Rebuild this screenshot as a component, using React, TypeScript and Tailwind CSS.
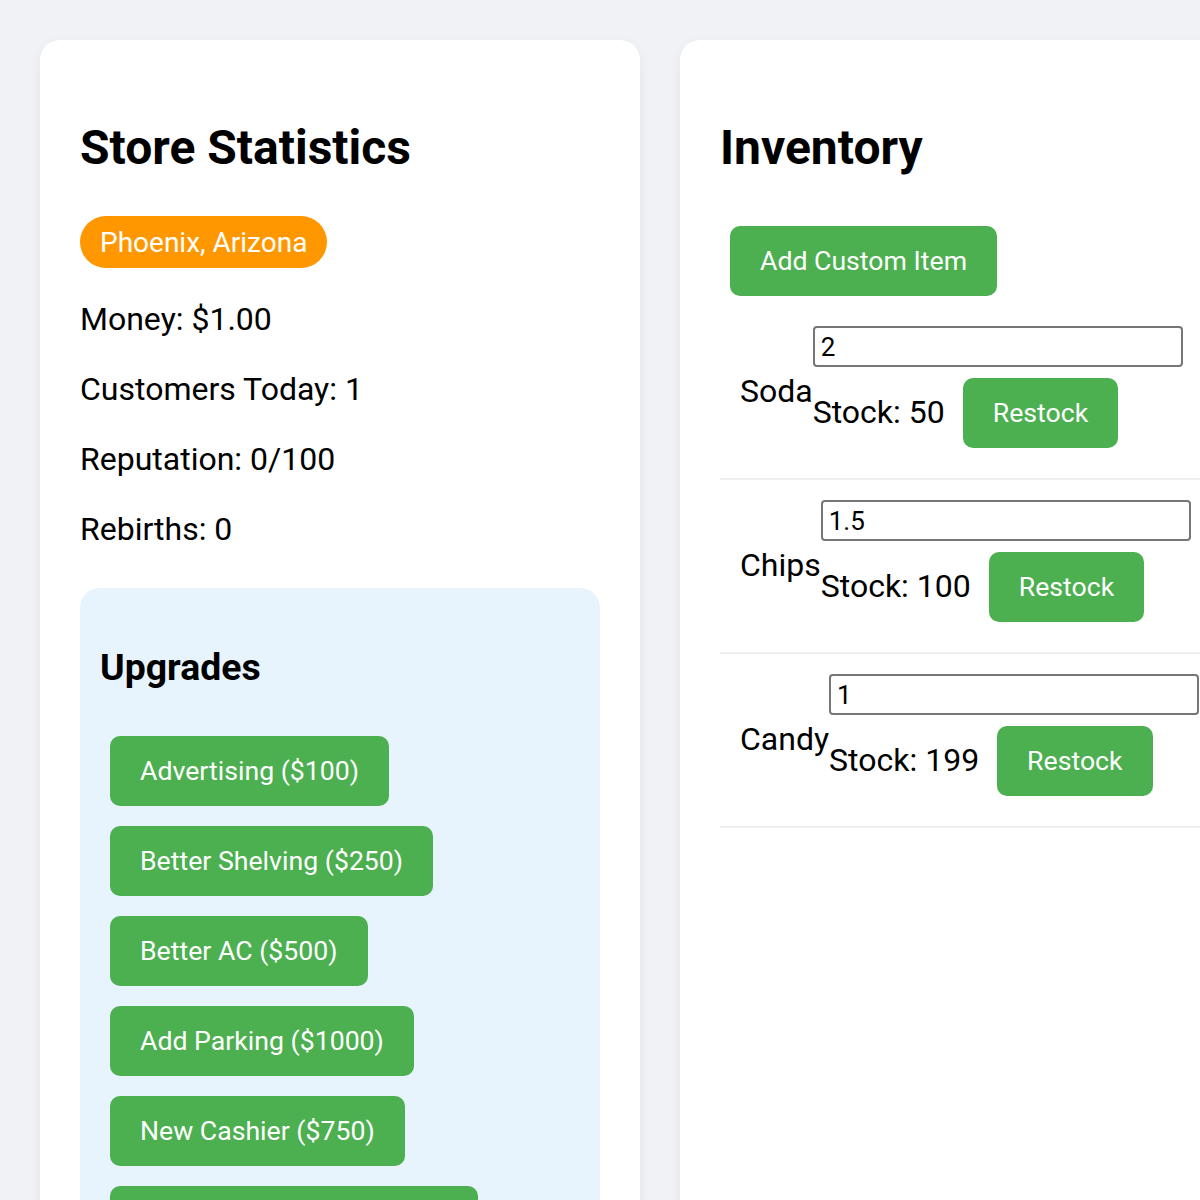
import React from "react";

const upgrades = [
  "Advertising ($100)",
  "Better Shelving ($250)",
  "Better AC ($500)",
  "Add Parking ($1000)",
  "New Cashier ($750)",
  "Security Cameras ($1500)",
];

const items = [
  { name: "Soda", price: "2", stock: 50 },
  { name: "Chips", price: "1.5", stock: 100 },
  { name: "Candy", price: "1", stock: 199 },
];

const btn =
  "bg-[#4caf50] text-white text-[26.67px] leading-[30px] px-[30px] py-[20px] rounded-[10px] m-[10px]";

export default function App() {
  return (
    <div className="min-h-[1200px] bg-[#f0f2f5] overflow-hidden font-['Roboto',sans-serif] text-black">
      <div className="w-[1320px] p-[40px] grid grid-cols-[600px_600px] gap-[40px]">
        {/* Store stats */}
        <div className="bg-white rounded-[20px] p-[40px] shadow-[0_4px_12px_rgba(0,0,0,0.06)]">
          <h2 className="text-[48px] font-bold leading-[56px] mt-[40px] mb-[40px]">Store Statistics</h2>
          <div>
            <span className="inline-block bg-[#ff9800] text-white text-[28px] leading-[32px] px-[20px] pt-[11px] pb-[9px] rounded-full">
              Phoenix, Arizona
            </span>
          </div>
          <div className="text-[32px] leading-[38px]">
            <p className="mt-[32px]">Money: $1.00</p>
            <p className="mt-[32px]">Customers Today: 1</p>
            <p className="mt-[32px]">Reputation: 0/100</p>
            <p className="mt-[32px]">Rebirths: 0</p>
          </div>
          <div className="mt-[40px] bg-[#e8f4fd] rounded-[20px] p-[20px] pb-[40px]">
            <h3 className="text-[37.4px] font-bold leading-[44px] mt-[37px] mb-[37px]">Upgrades</h3>
            <div className="flex flex-col items-start">
              {upgrades.map((u) => (
                <button key={u} className={btn}>
                  {u}
                </button>
              ))}
            </div>
          </div>
        </div>

        {/* Inventory */}
        <div className="bg-white rounded-[20px] p-[40px] shadow-[0_4px_12px_rgba(0,0,0,0.06)]">
          <h2 className="text-[48px] font-bold leading-[56px] mt-[40px] mb-[40px]">Inventory</h2>
          <button className={btn}>Add Custom Item</button>
          <div>
            {items.map((it) => (
              <div key={it.name} className="flex items-center p-[20px] border-b-2 border-[#eeeeee]">
                <span className="text-[32px] leading-[37.5px]">{it.name}</span>
                <div>
                  <input
                    readOnly
                    value={it.price}
                    className="block w-[370px] h-[41px] border-2 border-[#767676] rounded-[4px] px-[6px] text-[26px] font-['Roboto',sans-serif]"
                  />
                  <div className="flex items-center mt-[1px]">
                    <span className="text-[32px] leading-[37.5px] mr-[8px]">Stock: {it.stock}</span>
                    <button className={btn}>Restock</button>
                  </div>
                </div>
              </div>
            ))}
          </div>
        </div>
      </div>
    </div>
  );
}
